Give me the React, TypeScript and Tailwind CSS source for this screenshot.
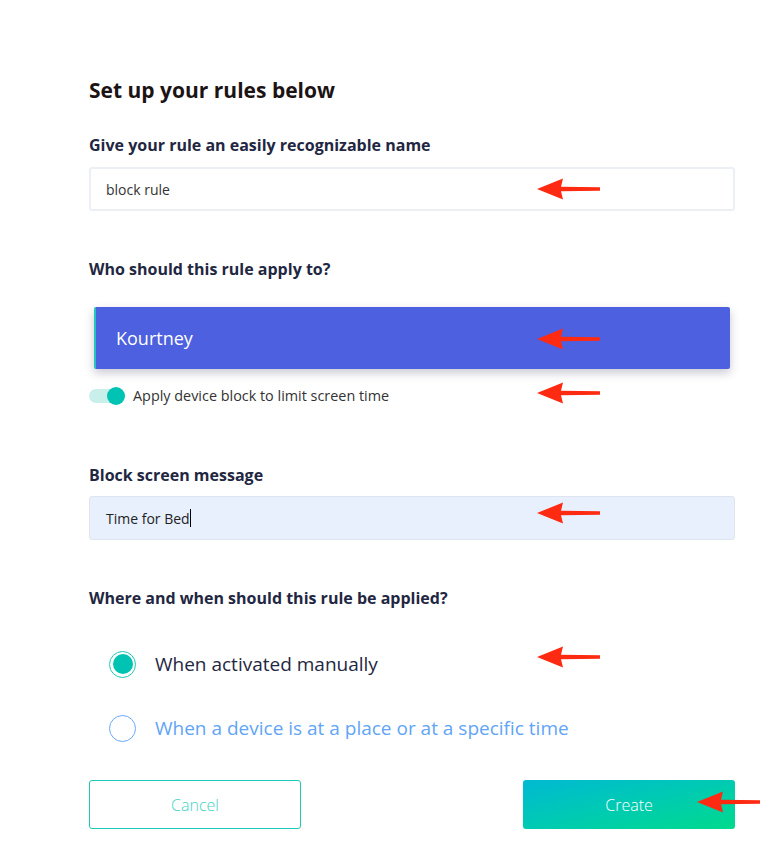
import React from "react";

const Arrow = ({ x, y }: { x: number; y: number }) => (
	<svg
		className="absolute"
		style={{ left: x, top: y - 12 }}
		width="66"
		height="24"
		viewBox="0 0 66 24"
	>
		<path d="M0 12 L26 1.5 L24 9.8 L63 10.2 L63 13.8 L24 14.2 L26 22.5 Z" fill="#ff2a12" />
	</svg>
);

export default function App() {
	return (
		<div className="relative w-[776px] h-[866px] bg-white font-['Open_Sans',_'Noto_Sans',_sans-serif] overflow-hidden">
			<div className="pl-[89px] pt-[76px] w-[735px] flex flex-col">
				<h1 className="text-[21px] leading-[28px] font-bold text-[#1c1414]">Set up your rules below</h1>

				<label className="mt-[29px] text-[16px] leading-[24px] font-bold text-[#1f2742]">
					Give your rule an easily recognizable name
				</label>
				<div className="mt-[10px] h-[44px] border-2 border-[#eceff4] rounded-[3px] flex items-center px-[15px] text-[14px] text-[#333]">
					block rule
				</div>

				<label className="mt-[46px] text-[16px] leading-[24px] font-bold text-[#1f2742]">
					Who should this rule apply to?
				</label>
				<div className="mt-[26px] ml-[5px] w-[636px] h-[62px] bg-[#4c60e0] border-l-2 border-[#27c4bb] rounded-[2px] shadow-[0_4px_10px_rgba(40,40,80,0.25)] flex items-center pl-[20px] text-[18px] text-white">
					Kourtney
				</div>

				<div className="mt-[17px] h-[20px] flex items-center">
					<div className="relative w-[36px] h-[20px] flex items-center">
						<div className="w-[32px] h-[14px] rounded-full bg-[#c9efeb]" />
						<div className="absolute left-[18px] top-[1px] w-[18px] h-[18px] rounded-full bg-[#00c3b3]" />
					</div>
					<span className="ml-[8px] text-[14.4px] text-[#333]">Apply device block to limit screen time</span>
				</div>

				<label className="mt-[57px] text-[16px] leading-[24px] font-bold text-[#1f2742]">
					Block screen message
				</label>
				<div className="mt-[9px] h-[44px] bg-[#e8f0fe] border border-[#dfe5ee] rounded-[3px] flex items-center px-[16px] text-[14px] text-[#222]">
					Time for Bed<span className="inline-block w-px h-[18px] bg-black" />
				</div>

				<label className="mt-[46px] text-[16px] leading-[24px] font-bold text-[#1f2742]">
					Where and when should this rule be applied?
				</label>

				<div className="mt-[40px] h-[28px] flex items-center pl-[20px]">
					<div className="w-[27px] h-[27px] rounded-full border-[1.5px] border-[#1ec8b8] flex items-center justify-center">
						<div className="w-[20px] h-[20px] rounded-full bg-[#00c3b3]" />
					</div>
					<span className="ml-[19px] text-[19px] font-medium text-[#1f2742]">When activated manually</span>
				</div>
				<div className="mt-[36px] h-[28px] flex items-center pl-[20px]">
					<div className="w-[27px] h-[27px] rounded-full border-[1.5px] border-[#6aa8f8]" />
					<span className="ml-[19px] text-[19px] font-medium text-[#62a5f6]">
						When a device is at a place or at a specific time
					</span>
				</div>

				<div className="mt-[38px] flex justify-between">
					<button className="w-[212px] h-[49px] border border-[#1ec8b8] rounded-[3px] text-[16px] font-light text-[#3fd3c4]">
						Cancel
					</button>
					<button className="w-[212px] h-[49px] rounded-[3px] bg-gradient-to-br from-[#00b9d2] to-[#00da8c] text-[16px] font-light text-white">
						Create
					</button>
				</div>
			</div>

			<Arrow x={537} y={189} />
			<Arrow x={537} y={339} />
			<Arrow x={537} y={393} />
			<Arrow x={537} y={513} />
			<Arrow x={537} y={657} />
			<Arrow x={697} y={802} />
		</div>
	);
}
